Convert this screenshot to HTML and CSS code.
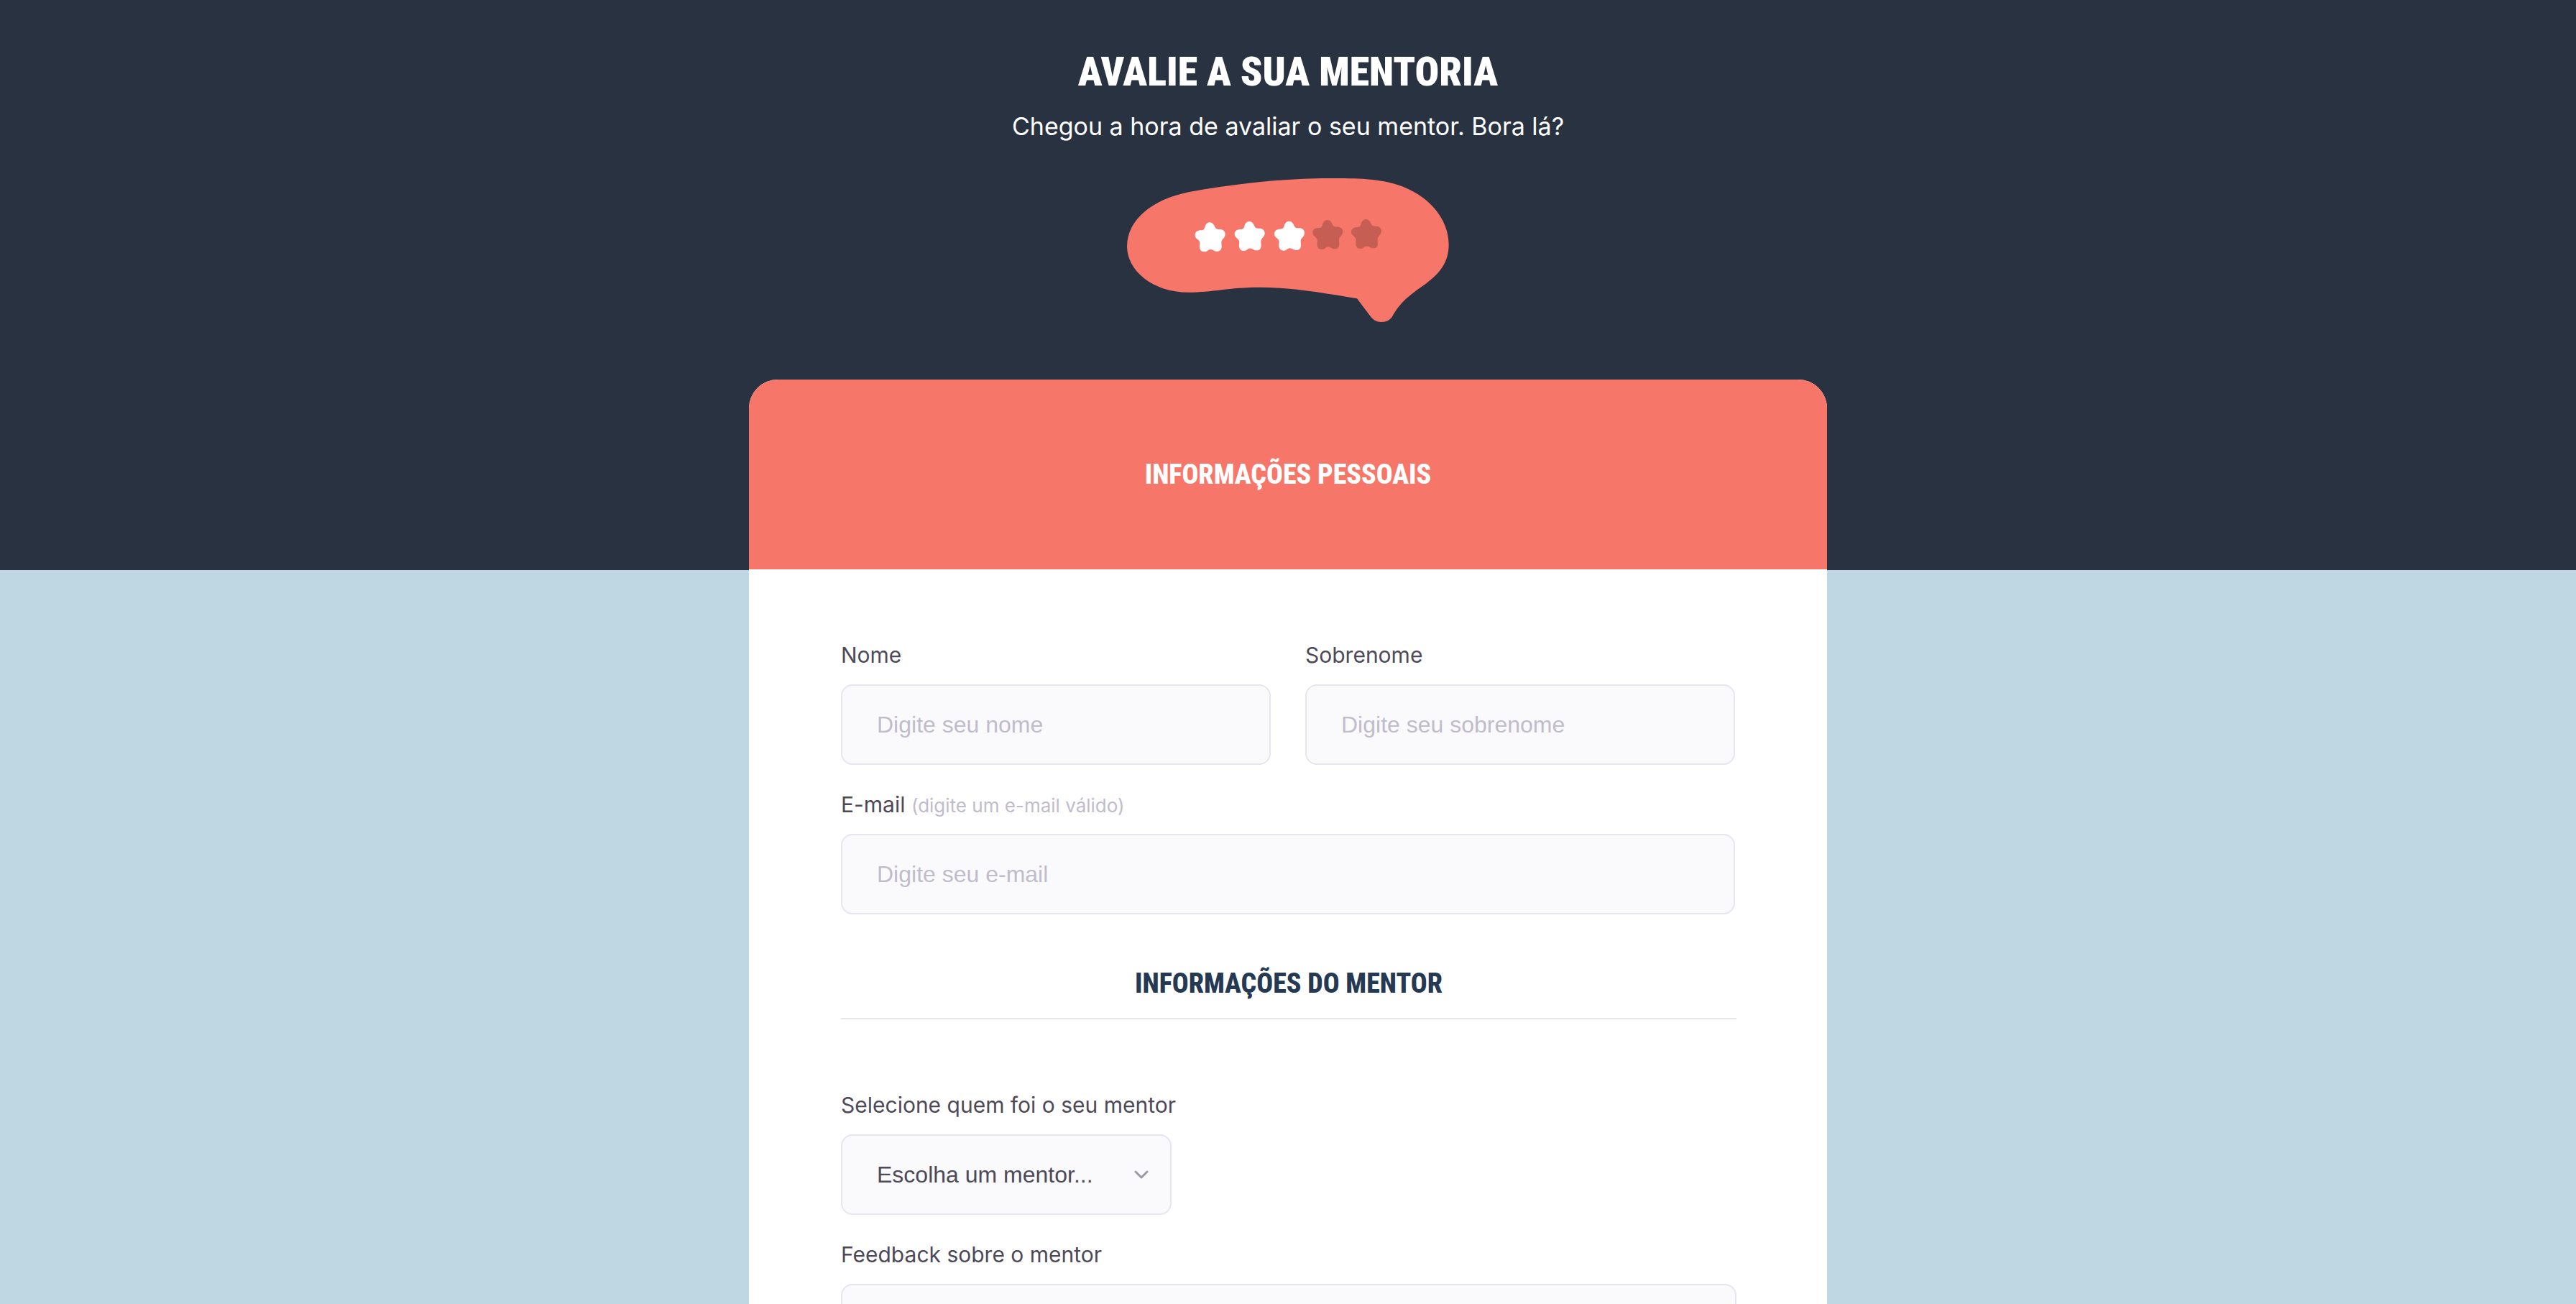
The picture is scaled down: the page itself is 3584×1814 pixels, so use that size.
FILE: index.html
```html
<!DOCTYPE html>
<html lang="pt-BR">
<head>
  <meta charset="utf-8">
  <meta name="viewport" content="width=device-width, initial-scale=1">
  <title>Avalie a sua mentoria</title>
  <link rel="stylesheet" href="styles.css">
</head>
<body>
  <header class="hero">
    <h1 class="hero-title">AVALIE A SUA MENTORIA</h1>
    <p class="hero-text">Chegou a hora de avaliar o seu mentor. Bora lá?</p>
    <svg class="bubble" viewBox="84 54 1344 600" aria-hidden="true">
      <defs>
        <path id="star" d="M429 238C418 238 412 247 409 258C406 268 402 271 393 271C378 271 368 279 368 290C368 301 375 306 382 312C389 318 388 324 387 334C385 351 393 361 407 361C415 361 420 357 424 353C429 350 437 350 442 353C450 358 455 359 461 359C474 358 479 350 479 339C479 332 477 322 479 315C482 308 494 301 494 287C494 274 484 267 472 267C461 267 457 268 452 259C447 248 441 238 429 238Z"/>
      </defs>
      <path class="bubble-shape" d="M84 338C86 225 190 143 340 112C540 74 760 54 920 54C1060 54 1130 56 1210 80C1345 122 1427 225 1427 330C1427 420 1372 465 1312 508C1252 550 1225 576 1195 624C1188 637 1178 654 1145 654C1122 654 1110 642 1100 630L1044 556C905 532 760 509 640 509C510 509 440 530 340 530C190 530 84 438 84 338Z"/>
      <g class="star-on">
        <use href="#star"/>
        <use href="#star" x="165" y="-4"/>
        <use href="#star" x="331" y="-5"/>
      </g>
      <g class="star-off">
        <use href="#star" x="491" y="-10"/>
        <use href="#star" x="652" y="-13"/>
      </g>
    </svg>
  </header>

  <main class="card">
    <div class="card-head">
      <h2 class="section-title">INFORMAÇÕES PESSOAIS</h2>
    </div>
    <form class="card-body">
      <div class="group group-personal">
        <div class="row">
          <div class="field">
            <label class="label" for="nome">Nome</label>
            <input class="control" id="nome" type="text" placeholder="Digite seu nome">
          </div>
          <div class="field">
            <label class="label" for="sobrenome">Sobrenome</label>
            <input class="control" id="sobrenome" type="text" placeholder="Digite seu sobrenome">
          </div>
        </div>
        <div class="field">
          <label class="label" for="email">E-mail <span class="hint">(digite um e-mail válido)</span></label>
          <input class="control" id="email" type="email" placeholder="Digite seu e-mail">
        </div>
      </div>

      <h2 class="section-title section-divider">INFORMAÇÕES DO MENTOR</h2>

      <div class="group">
        <div class="field field-select">
          <label class="label" for="mentor">Selecione quem foi o seu mentor</label>
          <div class="select-box">
            <select class="control" id="mentor">
              <option>Escolha um mentor...</option>
            </select>
            <svg class="chevron" viewBox="0 0 20 12" aria-hidden="true"><path d="M2 2L10 10L18 2"/></svg>
          </div>
        </div>
        <div class="field">
          <label class="label" for="feedback">Feedback sobre o mentor</label>
          <textarea class="control control-area" id="feedback"></textarea>
        </div>
      </div>
    </form>
  </main>
</body>
</html>
```
FILE: styles.css
```css
:root {
  --navy: #293241;
  --coral: #f67669;
  --sky: #bfd7e2;
  --ink: #4e4958;
  --muted: #c1bccc;
  --line: #e6e5f0;
  --field: #fafafc;
}

* {
  box-sizing: border-box;
  margin: 0;
}

body {
  min-height: 100vh;
  background: var(--sky);
  color: var(--ink);
  font-family: Inter, "Noto Sans", sans-serif;
}

.hero {
  display: flex;
  flex-direction: column;
  align-items: center;
  padding: 60px 32px 345px;
  background: var(--navy);
  color: #fff;
  text-align: center;
}

.hero-title {
  font: 900 56px/80px "Roboto Condensed", Roboto, sans-serif;
}

.hero-text {
  margin-top: 12px;
  font-size: 34px;
  line-height: 48px;
}

.bubble {
  width: 448px;
  height: 200px;
  margin-top: 48px;
}

.bubble-shape { fill: var(--coral); }
.star-on { fill: #fff; }
.star-off { fill: #c65e54; }

.card {
  max-width: 1500px;
  margin: -265px auto 0;
  border-radius: 40px 40px 0 0;
  background: #fff;
  overflow: hidden;
}

.card-head {
  display: flex;
  align-items: center;
  justify-content: center;
  height: 264px;
  background: var(--coral);
  color: #fff;
}

.section-title {
  font: 800 38px/64px "Roboto Condensed", Roboto, sans-serif;
  text-align: center;
}

.section-divider {
  margin: 64px 0 96px;
  padding-bottom: 16px;
  border-bottom: 2px solid var(--line);
  color: #253a52;
}

.card-body {
  padding: 96px 126px 96px 128px;
}

.group {
  display: flex;
  flex-direction: column;
  gap: 32px;
}

.group-personal { padding-right: 2px; }

.row {
  display: grid;
  grid-template-columns: 1fr 1fr;
  gap: 48px;
}

.field {
  display: flex;
  flex-direction: column;
  gap: 18px;
}

.field-select { width: 460px; }

.label {
  font-size: 30px;
  line-height: 46px;
  white-space: nowrap;
}

.hint {
  color: var(--muted);
  font-size: 26px;
  line-height: 1;
}

.control {
  display: block;
  width: 100%;
  height: 112px;
  padding: 0 48px;
  border: 2px solid var(--line);
  border-radius: 16px;
  background: var(--field);
  color: var(--ink);
  font: 32px "Liberation Sans", Arial, sans-serif;
  appearance: none;
}

.control::placeholder {
  color: var(--muted);
  opacity: 1;
}

.control-area {
  height: 280px;
  padding: 32px 48px;
  resize: none;
}

.select-box { position: relative; }

.chevron {
  position: absolute;
  top: 50px;
  right: 32px;
  width: 20px;
  height: 12px;
  fill: none;
  stroke: #9c98a6;
  stroke-width: 3;
  stroke-linecap: round;
  stroke-linejoin: round;
  pointer-events: none;
}
```
